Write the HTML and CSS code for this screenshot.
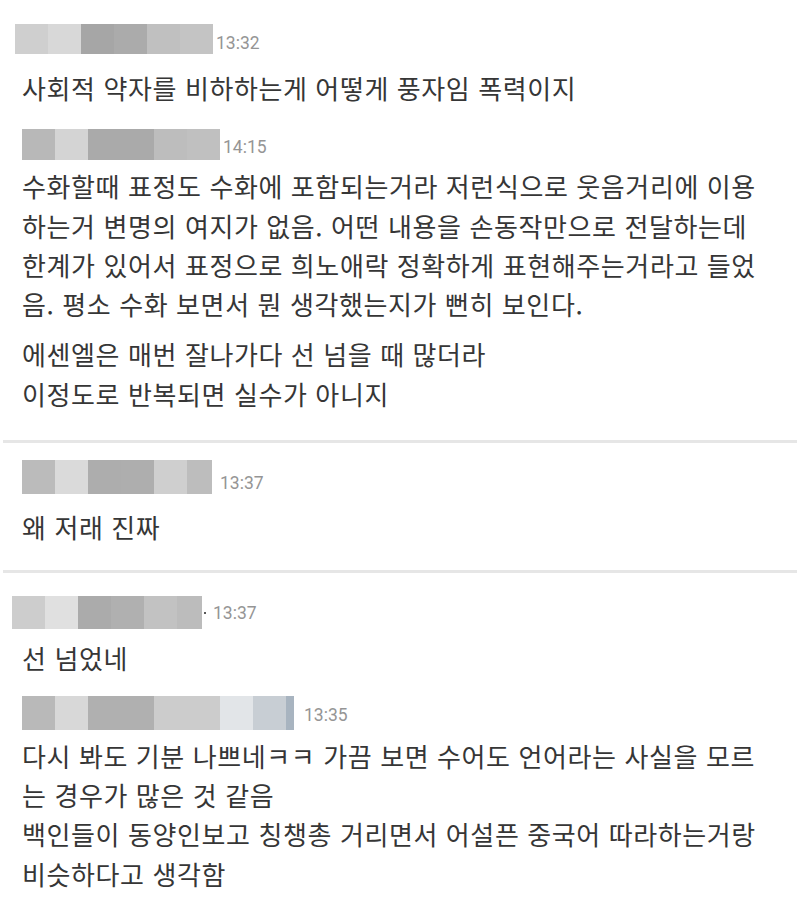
FILE: index.html
```html
<!DOCTYPE html>
<html lang="ko">
<head>
<meta charset="utf-8">
<link rel="stylesheet" href="styles.css">
</head>
<body>
<div class="page">
  <section class="group group-first">
    <div class="head head-a">
      <div class="mosaic">
        <span class="c w33" style="background:#cfcfcf"></span>
        <span class="c w33" style="background:#d8d8d8"></span>
        <span class="c w33" style="background:#a6a6a6"></span>
        <span class="c w33" style="background:#ababab"></span>
        <span class="c w33" style="background:#c0c0c0"></span>
        <span class="c w33" style="background:#c4c4c4"></span>
      </div>
      <span class="time">13:32</span>
    </div>
    <p class="text t-a">사회적 약자를 비하하는게 어떻게 풍자임 폭력이지</p>

    <div class="head head-b">
      <div class="mosaic">
        <span class="c w33" style="background:#b8b8b8"></span>
        <span class="c w33" style="background:#d4d4d4"></span>
        <span class="c w66" style="background:#aaaaaa"></span>
        <span class="c w33" style="background:#bdbdbd"></span>
        <span class="c w33" style="background:#c0c0c0"></span>
      </div>
      <span class="time">14:15</span>
    </div>
    <p class="text t-b">수화할때 표정도 수화에 포함되는거라 저런식으로 웃음거리에 이용<br>하는거 변명의 여지가 없음. 어떤 내용을 손동작만으로 전달하는데<br>한계가 있어서 표정으로 희노애락 정확하게 표현해주는거라고 들었<br>음. 평소 수화 보면서 뭔 생각했는지가 뻔히 보인다.</p>
    <p class="text t-c">에센엘은 매번 잘나가다 선 넘을 때 많더라<br>이정도로 반복되면 실수가 아니지</p>
  </section>

  <hr class="divider">

  <section class="group group-second">
    <div class="head head-c">
      <div class="mosaic">
        <span class="c w33" style="background:#bbbbbb"></span>
        <span class="c w33" style="background:#dadada"></span>
        <span class="c w33" style="background:#adadad"></span>
        <span class="c w33" style="background:#aeaeae"></span>
        <span class="c w33" style="background:#cfcfcf"></span>
        <span class="c w25" style="background:#bdbdbd"></span>
      </div>
      <span class="time">13:37</span>
    </div>
    <p class="text t-d">왜 저래 진짜</p>
  </section>

  <hr class="divider">

  <section class="group group-third">
    <div class="head head-d">
      <div class="mosaic">
        <span class="c w33" style="background:#cdcdcd"></span>
        <span class="c w33" style="background:#e0e0e0"></span>
        <span class="c w33" style="background:#ababab"></span>
        <span class="c w33" style="background:#b0b0b0"></span>
        <span class="c w33" style="background:#c2c2c2"></span>
        <span class="c w25" style="background:#bcbcbc"></span>
      </div>
      <span class="dot"></span>
      <span class="time">13:37</span>
    </div>
    <p class="text t-e">선 넘었네</p>

    <div class="head head-e">
      <div class="mosaic">
        <span class="c w33" style="background:#b9b9b9"></span>
        <span class="c w33" style="background:#d8d8d8"></span>
        <span class="c w66" style="background:#b0b0b0"></span>
        <span class="c w66" style="background:#cccccc"></span>
        <span class="c w33" style="background:#e2e5e8"></span>
        <span class="c w33" style="background:#c8ced4"></span>
        <span class="c w8" style="background:#a8b4c0"></span>
      </div>
      <span class="time">13:35</span>
    </div>
    <p class="text t-f">다시 봐도 기분 나쁘네ㅋㅋ 가끔 보면 수어도 언어라는 사실을 모르<br>는 경우가 많은 것 같음<br>백인들이 동양인보고 칭챙총 거리면서 어설픈 중국어 따라하는거랑<br>비슷하다고 생각함</p>
  </section>
</div>
</body>
</html>
```

FILE: styles.css
```css
html, body {
  margin: 0;
  padding: 0;
  background: #ffffff;
}

.page {
  width: 800px;
  font-family: "Noto Sans CJK KR", "Noto Sans", sans-serif;
  color: #363636;
}

.group {
  display: flex;
  flex-direction: column;
}

.group-first { padding-top: 24px; padding-bottom: 27px; }
.group-second { padding-top: 17px; padding-bottom: 24px; }
.group-third { padding-top: 23px; padding-bottom: 20px; }

.head {
  display: flex;
  align-items: center;
}

.head-a { padding-left: 15px; height: 30px; }
.head-b { padding-left: 22px; height: 31px; margin-top: 22px; }
.head-c { padding-left: 22px; height: 34px; }
.head-d { padding-left: 12px; height: 33px; }
.head-e { padding-left: 22px; height: 34px; margin-top: 18px; }

.mosaic {
  display: flex;
  height: 100%;
}

.c { display: block; height: 100%; }
.w33 { width: 33px; }
.w66 { width: 66px; }
.w25 { width: 25px; }
.w8 { width: 8px; }

.dot {
  width: 2px;
  height: 2px;
  background: #222;
  border-radius: 1px;
  margin-left: 2px;
}

.time {
  font-family: "Roboto", "Noto Sans", sans-serif;
  font-size: 17.5px;
  color: #959595;
  margin-left: 3px;
  padding-top: 8px;
}

.head-b .time { padding-top: 4px; }
.head-c .time { margin-left: 8px; padding-top: 12px; }
.head-d .time { margin-left: 7px; padding-top: 0; }
.head-e .time { margin-left: 10px; padding-top: 4px; }

.text {
  margin: 0;
  padding-left: 22px;
  font-size: 26px;
  letter-spacing: 0.6px;
  line-height: 39.3px;
  white-space: nowrap;
}

.t-a { margin-top: 14px; }
.t-b { margin-top: 6px; }
.t-c { margin-top: 11px; }
.t-d { margin-top: 13px; }
.t-e { margin-top: 9px; }
.t-f { margin-top: 6px; }

.divider {
  margin: 0 3px;
  border: 0;
  height: 3px;
  background: #e6e6e6;
}
```
